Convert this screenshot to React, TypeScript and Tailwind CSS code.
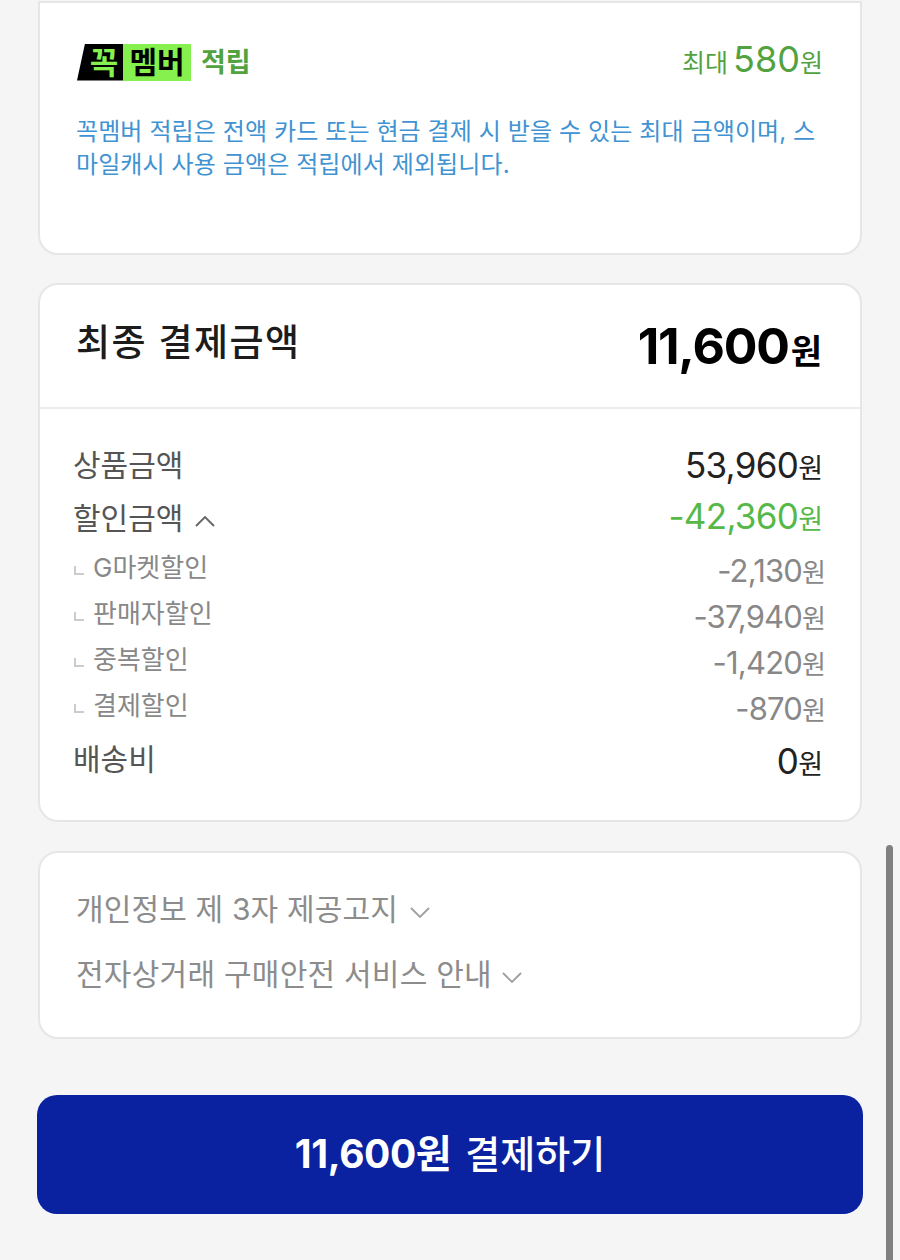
const FONT = "font-['Inter','Noto_Sans_CJK_KR',sans-serif]";

const subRows = [
  { label: "G마켓할인", value: "-2,130" },
  { label: "판매자할인", value: "-37,940" },
  { label: "중복할인", value: "-1,420" },
  { label: "결제할인", value: "-870" },
];

function Chevron({ up, className }: { up?: boolean; className: string }) {
  return (
    <svg viewBox="0 0 22 12" className={className} fill="none" stroke="currentColor" strokeWidth="1.9">
      <path d={up ? "M2 11L11 2L20 11" : "M2 1L11 10L20 1"} />
    </svg>
  );
}

function Won({ value, className }: { value: string; className: string }) {
  return (
    <div className={`flex items-baseline ${className}`}>
      <span className="text-[35px] tracking-[-0.7px] leading-none">{value}</span>
      <span className="text-[27px] leading-none">원</span>
    </div>
  );
}

export default function App() {
  return (
    <div className={`relative h-[1260px] w-[900px] overflow-hidden bg-[#f5f5f5] ${FONT}`}>
      <div className="absolute right-[7px] top-[845px] h-[415px] w-[7px] rounded-t-full bg-[#808080]" />

      <div className="flex flex-col px-[38px]">
        <section className="mt-[1px] h-[254px] rounded-b-[20px] border-2 border-[#e6e6e6] bg-white px-[37px] pt-[38px]">
          <div className="flex items-center justify-between">
            <div className="flex items-center">
              <span className="flex h-[37px] w-[46px] items-center justify-center bg-black pl-[8px] text-[31px] font-bold leading-none text-[#86f04f] [clip-path:polygon(8px_0,100%_0,100%_100%,0_100%)]">꼭</span>
              <span className="flex h-[37px] w-[68px] items-center justify-center bg-[#86f04f] text-[30px] font-bold leading-none text-black">멤버</span>
              <span className="ml-[10px] text-[27px] font-bold leading-none text-[#52a23f]">적립</span>
            </div>
            <div className="mb-[4px] flex items-baseline text-[#52a23f]">
              <span className="mb-[3px] text-[25px] leading-none">최대</span>
              <span className="ml-[5px] text-[36px] leading-none">580</span>
              <span className="text-[25px] leading-none">원</span>
            </div>
          </div>
          <p className="-ml-px mt-[32px] text-[24px] leading-[33px] tracking-[0.1px] text-[#3f93d3]">
            꼭멤버 적립은 전액 카드 또는 현금 결제 시 받을 수 있는 최대 금액이며, 스마일캐시 사용 금액은 적립에서 제외됩니다.
          </p>
        </section>

        <section className="mt-[28px] h-[539px] rounded-[20px] border-2 border-[#e6e6e6] bg-white">
          <div className="flex h-[124px] items-center justify-between border-b-2 border-[#ececec] pl-[36px] pr-[38px]">
            <span className="mb-[7px] text-[37px] font-medium tracking-[1.5px] text-[#1c1c1c]">최종 결제금액</span>
            <div className="flex items-baseline text-black">
              <span className="text-[50px] font-bold leading-none tracking-[-1.2px]">11,600</span>
              <span className="ml-[2px] text-[34px] font-bold leading-none">원</span>
            </div>
          </div>

          <div className="flex flex-col pl-[33px] pr-[37px] pt-[32px]">
            <div className="flex h-[48px] items-center justify-between">
              <span className="text-[30px] text-[#555555]">상품금액</span>
              <Won value="53,960" className="text-[#222222]" />
            </div>
            <div className="flex h-[54px] items-center justify-between">
              <div className="flex items-center">
                <span className="mt-[5px] text-[30px] text-[#555555]">할인금액</span>
                <Chevron up className="ml-[11px] mt-[9px] h-[12px] w-[22px] text-[#666666]" />
              </div>
              <Won value="-42,360" className="text-[#55b848]" />
            </div>

            {subRows.map((row) => (
              <div key={row.label} className="flex h-[46px] items-center justify-between">
                <div className="flex items-center pt-[2px]">
                  <span className="ml-[1px] mt-[6px] h-[9px] w-[10px] border-b-2 border-l-2 border-[#cccccc]" />
                  <span className="ml-[9px] text-[26px] text-[#888888]">{row.label}</span>
                </div>
                <div className="-mr-[3px] flex items-baseline pt-[8px] text-[#888888]">
                  <span className="text-[31px] leading-none tracking-[-0.8px]">{row.value}</span>
                  <span className="text-[26px] leading-none">원</span>
                </div>
              </div>
            ))}

            <div className="flex h-[52px] items-center justify-between pt-[12px]">
              <span className="text-[30px] text-[#555555]">배송비</span>
              <Won value="0" className="pt-[4px] text-[#222222]" />
            </div>
          </div>
        </section>

        <section className="mt-[29px] flex h-[188px] flex-col gap-[25px] rounded-[20px] border-2 border-[#e6e6e6] bg-white pl-[36px] pt-[36px]">
          <div className="flex h-[40px] items-center text-[#8c8c8c]">
            <span className="text-[30px] tracking-[0.15px]">개인정보 제 3자 제공고지</span>
            <Chevron className="ml-[11px] mt-[8px] h-[12px] w-[22px] text-[#a0a0a0]" />
          </div>
          <div className="flex h-[40px] items-center text-[#8c8c8c]">
            <span className="text-[30px] tracking-[0.25px]">전자상거래 구매안전 서비스 안내</span>
            <Chevron className="ml-[9px] mt-[8px] h-[12px] w-[22px] text-[#a0a0a0]" />
          </div>
        </section>

        <button className="-mx-px mt-[56px] flex h-[119px] items-center justify-center rounded-[20px] bg-[#0a22a0] text-white">
          <span className="text-[39px] font-bold tracking-[-0.4px]">11,600원</span>
          <span className="ml-[14px] text-[38px] font-medium">결제하기</span>
        </button>
      </div>
    </div>
  );
}
